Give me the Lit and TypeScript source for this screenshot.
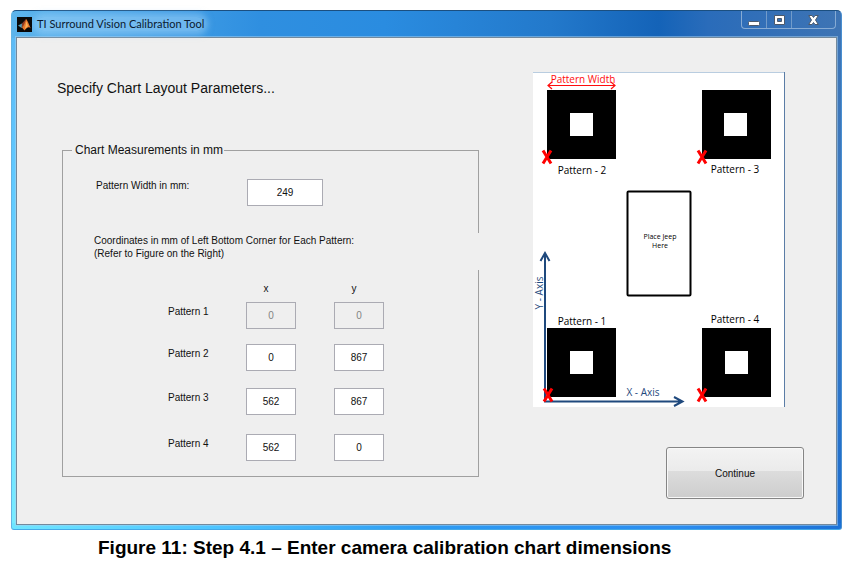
import { LitElement, html, svg, css } from "lit";
import { customElement, state } from "lit/decorators.js";

interface PatternRow {
  name: string;
  x: string;
  y: string;
  locked: boolean;
}

/** Plan view of the four patterns around the vehicle. */
@customElement("chart-figure")
class ChartFigure extends LitElement {
  static styles = css`
    :host {
      display: block;
    }
    svg {
      display: block;
      width: 252px;
      max-width: 100%;
      height: auto;
      font-family: "Open Sans", "Noto Sans", sans-serif;
      font-size: 10px;
    }
    .small {
      font-size: 7px;
    }
    .red {
      fill: #ff0d0d;
    }
    .blue {
      fill: #1f497d;
    }
  `;

  private square(x: number, y: number, hx: number) {
    return svg`
      <rect x=${x} y=${y} width="69" height="69" fill="#000" />
      <rect x=${hx} y=${y + 23} width="23" height="23" fill="#fff" />`;
  }

  private cross(x: number, y: number) {
    return svg`<path d="M${x - 4} ${y - 6.5} L${x + 4} ${y + 6.5} M${x + 4} ${y - 6.5} L${x - 4} ${y + 6.5}"
      stroke="#ff0000" stroke-width="3" fill="none" />`;
  }

  render() {
    return html`
      <svg viewBox="0 0 252 335" role="img" aria-label="Chart layout">
        <rect width="252" height="335" fill="#fff" />
        <path d="M0 .5H252" stroke="#b9cde0" />
        <path d="M251.5 0V335" stroke="#5b7da6" />
        ${this.square(14, 18, 37)} ${this.square(169, 18, 191)}
        ${this.square(14, 256, 37)} ${this.square(169, 256, 192)}
        <rect x="94.5" y="119.5" width="63" height="104" rx="1" fill="#fff" stroke="#000" stroke-width="2" />
        <text class="small" x="127" y="167" text-anchor="middle">Place Jeep</text>
        <text class="small" x="127" y="176" text-anchor="middle">Here</text>
        <g fill="none" stroke="#1f497d" stroke-width="2">
          <path d="M12 330V182M7.500 189L12 181L16.500 189" />
          <path d="M11 329.500H148M141 325L149.500 329.500L141 334" />
        </g>
        <path d="M15 13.500H82M19 10L15 13.500L19 17M78 10L82 13.500L78 17" fill="none" stroke="#ff0d0d" stroke-width="1.200" />
        ${this.cross(14, 85)} ${this.cross(169, 85)} ${this.cross(15, 323)} ${this.cross(169, 323)}
        <text class="red" x="50" y="11" text-anchor="middle">Pattern Width</text>
        <text x="49" y="102" text-anchor="middle">Pattern - 2</text>
        <text x="202" y="101" text-anchor="middle">Pattern - 3</text>
        <text x="49" y="253" text-anchor="middle">Pattern - 1</text>
        <text x="202" y="251" text-anchor="middle">Pattern - 4</text>
        <text class="blue" x="110" y="324" text-anchor="middle">X - Axis</text>
        <text class="blue" x="0" y="0" text-anchor="middle" transform="translate(10 221) rotate(-90)">Y - Axis</text>
      </svg>
    `;
  }
}

@customElement("app-root")
class AppRoot extends LitElement {
  static styles = css`
    :host {
      display: block;
      box-sizing: border-box;
      min-height: 100vh;
      padding: 10px 11px;
      background: #fff;
      color: #111;
      font: 10px/13px "Liberation Sans", Arial, sans-serif;
    }
    * {
      box-sizing: border-box;
    }
    .window {
      padding: 0 4px 4px;
      border: 1px solid #3f7fb5;
      border-color: #1b4f80 #4a8fd0 #45a9e8 #64b4e4;
      border-radius: 5px 5px 3px 3px;
      background:
        linear-gradient(90deg, #5cb4ec 0, #2f8fe0 30%, #2a8ce0 45%, #2379cb 65%, #1463b8 78%, #2a6cba 84%, #3e74b4 100%) top / 100% 27px no-repeat,
        linear-gradient(90deg, #6fe6ff 0, #4cc4ff 25%, #2d9bf2 50%, #2b8df0 80%, #1c72d6 100%) bottom / 100% 6px no-repeat,
        linear-gradient(#5cb8f4, #5fc8ff 30%, #78ecff) left / 6px 100% no-repeat,
        linear-gradient(#3e74b4, #3d7cc4 50%, #1a6cd0) right / 6px 100% no-repeat;
    }
    .titlebar {
      display: flex;
      justify-content: space-between;
      height: 26px;
      padding: 0 1px;
    }
    .title {
      display: flex;
      align-items: center;
      gap: 5px;
      margin: 0;
      font: 11px/14px Lato, "Open Sans", sans-serif;
      color: #0a1a30;
    }
    .title span {
      border-radius: 8px;
      background: rgba(160, 212, 250, 0.5);
      box-shadow: 0 0 6px 4px rgba(160, 212, 250, 0.5);
    }
    .logo {
      position: relative;
      display: block;
      z-index: 1;
    }
    .controls {
      display: flex;
      height: 18px;
      border: 1px solid #86abd4;
      border-top: 0;
      border-radius: 0 0 4px 4px;
    }
    .controls button {
      display: grid;
      place-items: center;
      width: 25px;
      margin: 0;
      padding: 0;
      border: 0;
      border-right: 1px solid #719bca;
      background: none;
    }
    .controls button:last-child {
      width: 43px;
      border-right: 0;
    }
    .client {
      display: grid;
      grid-template-columns: minmax(0, 1fr) 271px;
      gap: 54px;
      padding: 34px 32px 25px 40px;
      border: 1px solid #73899c;
      background: #efefef;
      box-shadow: 0 0 0 1px rgba(170, 210, 240, 0.5);
    }
    h1 {
      margin: 6px 0 44px;
      font-size: 14px;
      line-height: 20px;
      font-weight: 400;
    }
    fieldset {
      min-width: 0;
      margin: 0 0 0 5px;
      padding: 0 0 14px;
      border: 1px solid #a0a0a0;
    }
    legend {
      margin-left: 9px;
      padding: 0 1px 0 3px;
      font-size: 12px;
      line-height: 16px;
    }
    .width-row {
      display: flex;
      padding: 21px 0 27px 33px;
    }
    .width-row label {
      width: 151px;
    }
    input {
      width: 50px;
      height: 27px;
      margin: 0;
      padding: 0;
      border: 1px solid #ababb3;
      border-radius: 0;
      background: #fff;
      color: #111;
      font: inherit;
      text-align: center;
    }
    .width-row input {
      width: 76px;
    }
    input:disabled {
      background: #efefef;
      color: #838383;
    }
    .note {
      margin: 0 -2px 12px 27px;
      padding: 1px 0 10px 4px;
      background: #efefef;
    }
    table {
      display: grid;
      grid-template-columns: 40px 50px 50px;
      grid-template-rows: 20px 42px 44px 46px 28px;
      column-gap: 38px;
      margin-left: 105px;
    }
    thead,
    tbody,
    tr {
      display: contents;
    }
    th,
    td {
      padding: 0;
      font-weight: 400;
      text-align: left;
    }
    thead th {
      padding-right: 10px;
      text-align: center;
    }
    tbody th {
      padding-top: 3px;
      white-space: nowrap;
    }
    .side {
      display: flex;
      flex-direction: column;
      gap: 40px;
    }
    .continue {
      align-self: flex-end;
      width: 138px;
      height: 52px;
      border: 1px solid #858585;
      border-radius: 3px;
      background: linear-gradient(#f3f3f3, #ebebeb 46%, #dcdcdc 47%, #cdcdcd);
      box-shadow: inset 0 0 0 1px #f8f8f8;
      color: #111;
      font: inherit;
    }
    figure {
      margin: 0;
    }
    figcaption {
      padding: 6px 0 0 87px;
      color: #000;
      font-size: 19px;
      line-height: 24px;
      font-weight: 700;
    }
  `;

  @state() private patternWidth = "249";

  @state() private rows: PatternRow[] = [
    { name: "Pattern 1", x: "0", y: "0", locked: true },
    { name: "Pattern 2", x: "0", y: "867", locked: false },
    { name: "Pattern 3", x: "562", y: "867", locked: false },
    { name: "Pattern 4", x: "562", y: "0", locked: false },
  ];

  private renderRow(row: PatternRow) {
    return html`
      <tr>
        <th scope="row">${row.name}</th>
        <td><input aria-label="${row.name} x" .value=${row.x} ?disabled=${row.locked} /></td>
        <td><input aria-label="${row.name} y" .value=${row.y} ?disabled=${row.locked} /></td>
      </tr>
    `;
  }

  render() {
    return html`
      <figure>
        <div class="window">
          <header class="titlebar">
            <div class="title">
              <svg class="logo" width="15" height="15" viewBox="0 0 15 15" aria-hidden="true">
                <rect width="15" height="15" fill="#080808" />
                <path d="M1 8.500L5 6.500L7 8L4.500 11Z" fill="#4f9bb5" />
                <path d="M5 6.500L9 2L7.500 8L5.500 10L4.500 11Z" fill="#8a3a24" />
                <path d="M9 2C10.500 3 12 8 14 11.500C12 9.500 10.500 10 7.500 13.500L5 10.500C7 9 8 5 9 2Z" fill="#e8762c" />
                <path d="M9.300 4L11 9L8 12Z" fill="#f7b45c" />
              </svg>
              <span>TI Surround Vision Calibration Tool</span>
            </div>
            <div class="controls">
              <button aria-label="Minimize">
                <svg width="12" height="12" viewBox="0 0 12 12"><rect x=".5" y="7.500" width="11" height="4" rx="1" fill="#fff" stroke="#4c5a6c" /></svg>
              </button>
              <button aria-label="Maximize">
                <svg width="11" height="10" viewBox="0 0 11 10"><path d="M.5 .5H10.500V9.500H.5ZM3.500 3.500V6.500H7.500V3.500Z" fill="#fff" fill-rule="evenodd" stroke="#4c5a6c" /></svg>
              </button>
              <button aria-label="Close">
                <svg width="11" height="10" viewBox="0 0 11 10"><path d="M.7 .5H4L5.500 2.500L7 .5H10.300L7.500 5L10.300 9.500H7L5.500 7.500L4 9.500H.7L3.500 5Z" fill="#fff" stroke="#4c5a6c" /></svg>
              </button>
            </div>
          </header>
          <main class="client">
            <section>
              <h1>Specify Chart Layout Parameters...</h1>
              <fieldset>
                <legend>Chart Measurements in mm</legend>
                <div class="width-row">
                  <label for="pattern-width">Pattern Width in mm:</label>
                  <input id="pattern-width" .value=${this.patternWidth} />
                </div>
                <p class="note">
                  Coordinates in mm of Left Bottom Corner for Each Pattern:<br />(Refer to Figure on the Right)
                </p>
                <table>
                  <thead>
                    <tr>
                      <td></td>
                      <th scope="col">x</th>
                      <th scope="col">y</th>
                    </tr>
                  </thead>
                  <tbody>
                    ${this.rows.map((row) => this.renderRow(row))}
                  </tbody>
                </table>
              </fieldset>
            </section>
            <section class="side">
              <chart-figure></chart-figure>
              <button class="continue">Continue</button>
            </section>
          </main>
        </div>
        <figcaption>Figure 11: Step 4.1 – Enter camera calibration chart dimensions</figcaption>
      </figure>
    `;
  }
}
